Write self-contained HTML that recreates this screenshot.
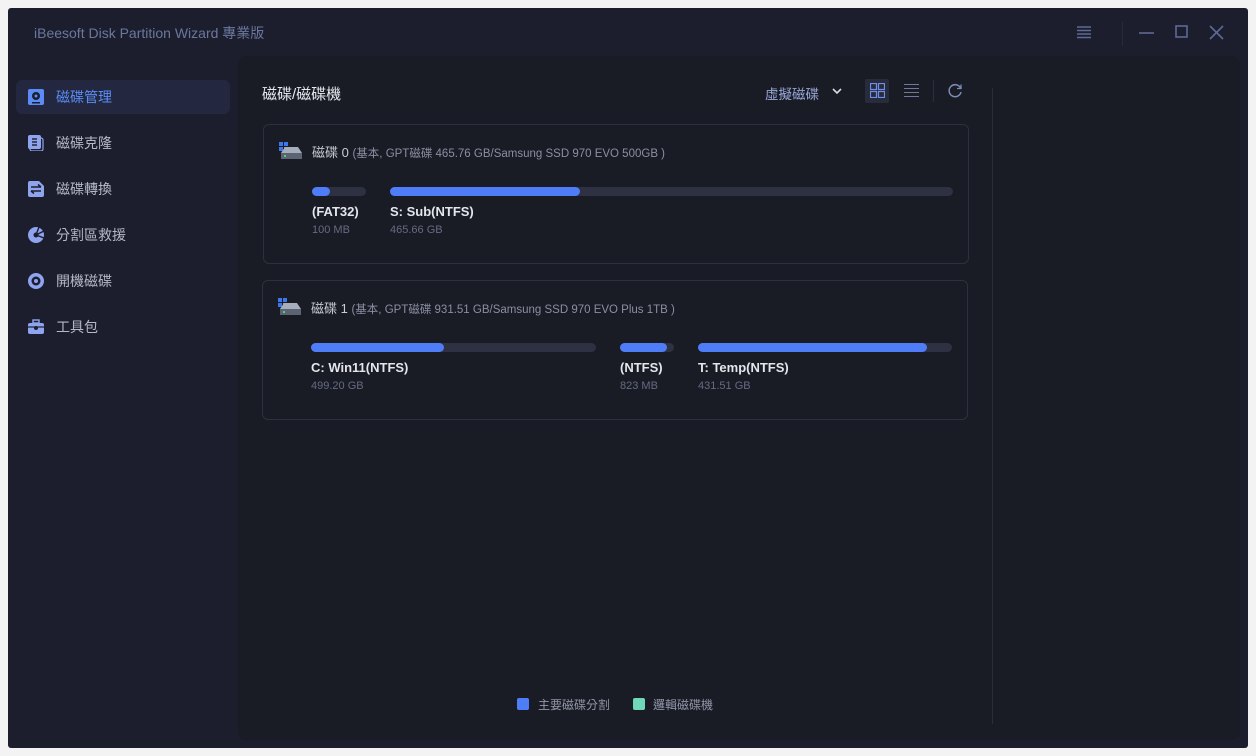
<!DOCTYPE html>
<html><head><meta charset="utf-8"><style>
*{margin:0;padding:0;box-sizing:border-box}
body{width:1256px;height:756px;background:#f3f3f4;font-family:"Liberation Sans","Noto Sans CJK TC",sans-serif;overflow:hidden;position:relative}
.app{position:absolute;left:8px;top:8px;width:1240px;height:740px;background:#1c1e2e;border-radius:3px}
.abs{position:absolute}
.title{left:26px;top:15px;font-size:14px;color:#6a789c}
.nav{left:8px;width:214px;height:34px;display:flex;align-items:center;font-size:14px;color:#b5b9c6}
.nav.act{background:#232840;border-radius:6px;color:#5b8cf5}
.nav svg{margin-left:12px;margin-right:12px}
.panel{left:230px;top:48px;width:1002px;height:684px;background:#191b25;border-radius:8px}
.card{position:absolute;left:25px;width:706px;height:140px;border:1px solid #2d3040;border-radius:6px}
.hdr{position:absolute;left:48px;top:17px;font-size:13px;color:#c8cbd4;white-space:nowrap}
.hdr small{font-size:11.5px;color:#8a8fa3}
.bar{position:absolute;top:62px;height:9px;background:#2d3142;border-radius:5px}
.bar i{display:block;height:9px;background:#4f7cf7;border-radius:5px}
.lbl{position:absolute;top:79px;font-size:13px;font-weight:bold;color:#e4e6ec;white-space:nowrap}
.sz{position:absolute;top:99px;font-size:11px;color:#656b83;white-space:nowrap}
</style></head><body>
<div class="app">
<div class="abs title">iBeesoft Disk Partition Wizard 專業版</div>
<svg class="abs" style="left:1068px;top:17px" width="16" height="14"><g stroke="#5d6a94" stroke-width="1.5"><line x1="1" y1="2" x2="15" y2="2"/><line x1="1" y1="5.5" x2="15" y2="5.5"/><line x1="1" y1="9" x2="15" y2="9"/><line x1="1" y1="12.5" x2="15" y2="12.5"/></g></svg>
<div class="abs" style="left:1114px;top:14px;width:1px;height:24px;background:#262a3c"></div>
<svg class="abs" style="left:1130px;top:16px" width="100" height="16"><g stroke="#5d6a94" stroke-width="1.6" fill="none"><line x1="1" y1="9" x2="16" y2="9"/><rect x="38" y="2" width="11" height="11"/><path d="M72 2 L85 15 M85 2 L72 15"/></g></svg>

<div class="abs nav act" style="top:72px"><svg width="16" height="16"><rect x="0" y="0" width="16" height="16" rx="2" fill="#5b8cf5"/><circle cx="8" cy="7" r="4" fill="#1c1e2e"/><circle cx="8" cy="7" r="1.5" fill="#5b8cf5"/><rect x="4" y="13" width="8" height="1.5" fill="#1c1e2e"/></svg>磁碟管理</div>
<div class="abs nav" style="top:118px"><svg width="16" height="16"><rect x="2" y="3" width="13" height="13" rx="2" fill="none" stroke="#8fa4ee" stroke-width="1.2"/><rect x="0" y="0" width="13" height="14" rx="2" fill="#8fa4ee"/><g stroke="#1c1e2e" stroke-width="1.4"><line x1="4" y1="4" x2="9" y2="4"/><line x1="4" y1="7" x2="9" y2="7"/><line x1="4" y1="10" x2="9" y2="10"/></g></svg>磁碟克隆</div>
<div class="abs nav" style="top:164px"><svg width="16" height="16"><path d="M0 2 Q0 0 2 0 L11 0 L16 5 L16 14 Q16 16 14 16 L2 16 Q0 16 0 14Z" fill="#8fa4ee"/><g stroke="#1c1e2e" stroke-width="1.5" fill="none"><path d="M3 6 H13 M10 3.5 L13 6 M13 10 H3 M6 12.5 L3 10"/></g></svg>磁碟轉換</div>
<div class="abs nav" style="top:210px"><svg width="16" height="16"><circle cx="8" cy="8" r="8" fill="#8fa4ee"/><path d="M8 8 L16 4 M8 8 L16 11 M8 8 L11 0" stroke="#1c1e2e" stroke-width="1.4"/><circle cx="8" cy="8" r="2.5" fill="#1c1e2e"/></svg>分割區救援</div>
<div class="abs nav" style="top:256px"><svg width="16" height="16"><circle cx="8" cy="8" r="8" fill="#8fa4ee"/><circle cx="8" cy="8" r="4.5" fill="#1c1e2e"/><circle cx="8" cy="8" r="2" fill="#8fa4ee"/></svg>開機磁碟</div>
<div class="abs nav" style="top:302px"><svg width="16" height="16"><rect x="5" y="1" width="6" height="3" fill="none" stroke="#8fa4ee" stroke-width="1.4"/><rect x="0" y="4" width="16" height="11" rx="2" fill="#8fa4ee"/><line x1="0" y1="8" x2="16" y2="8" stroke="#1c1e2e" stroke-width="1.2"/><circle cx="8" cy="9" r="2" fill="#1c1e2e"/></svg>工具包</div>

<div class="abs panel">
 <div class="abs" style="left:24px;top:27px;font-size:15px;color:#e8eaf0">磁碟/磁碟機</div>
 <div class="abs" style="left:527px;top:27px;font-size:13.5px;color:#9aa8d8">虛擬磁碟</div>
 <svg class="abs" style="left:594px;top:31px" width="10" height="8"><path d="M1 2 L5 6 L9 2" stroke="#d8dbe4" stroke-width="1.6" fill="none"/></svg>
 <div class="abs" style="left:627px;top:23px;width:24px;height:24px;background:#272b3c;border-radius:2px"></div>
 <svg class="abs" style="left:632px;top:27px" width="15" height="15"><g fill="none" stroke="#6f8ee8" stroke-width="1.2"><rect x="0.5" y="0.5" width="6" height="6"/><rect x="8.5" y="0.5" width="6" height="6"/><rect x="0.5" y="8.5" width="6" height="6"/><rect x="8.5" y="8.5" width="6" height="6"/></g></svg>
 <svg class="abs" style="left:666px;top:27px" width="15" height="15"><g stroke="#6f7a9a" stroke-width="1"><line x1="0" y1="1.5" x2="15" y2="1.5"/><line x1="0" y1="5.5" x2="15" y2="5.5"/><line x1="0" y1="9.5" x2="15" y2="9.5"/><line x1="0" y1="13.5" x2="15" y2="13.5"/></g></svg>
 <div class="abs" style="left:695px;top:24px;width:1px;height:22px;background:#2a2e3e"></div>
 <svg class="abs" style="left:709px;top:27px" width="16" height="16"><path d="M13.5 5 A6 6 0 1 0 14 9" fill="none" stroke="#7b8db8" stroke-width="1.5"/><path d="M14 1.5 V5.5 H10" fill="none" stroke="#7b8db8" stroke-width="1.3"/></svg>
 <div class="abs" style="left:754px;top:32px;width:1px;height:636px;background:#2a2d3c"></div>

 <div class="card" style="top:68px">
  <svg class="abs" style="left:15px;top:17px" width="24" height="18"><rect x="0" y="0" width="4" height="4" fill="#3e78e8"/><rect x="5" y="0" width="4" height="4" fill="#3e78e8"/><rect x="0" y="5" width="4" height="4" fill="#3e78e8"/><rect x="5" y="5" width="4" height="4" fill="#6c9cf5"/><path d="M2 11 L6 5 H19 L23 11 V16 H2Z" fill="#a6adbd"/><rect x="2" y="11" width="21" height="6" fill="#5c6474"/><rect x="5" y="13" width="2" height="2" fill="#4fd08a"/></svg>
  <div class="hdr">磁碟 0 <small>(基本, GPT磁碟 465.76 GB/Samsung SSD 970 EVO 500GB )</small></div>
  <div class="bar" style="left:48px;width:54px"><i style="width:18px"></i></div>
  <div class="lbl" style="left:48px">(FAT32)</div><div class="sz" style="left:48px">100 MB</div>
  <div class="bar" style="left:126px;width:563px"><i style="width:190px"></i></div>
  <div class="lbl" style="left:126px">S: Sub(NTFS)</div><div class="sz" style="left:126px">465.66 GB</div>
 </div>

 <div class="card" style="top:224px;left:24px">
  <svg class="abs" style="left:15px;top:17px" width="24" height="18"><rect x="0" y="0" width="4" height="4" fill="#3e78e8"/><rect x="5" y="0" width="4" height="4" fill="#3e78e8"/><rect x="0" y="5" width="4" height="4" fill="#3e78e8"/><rect x="5" y="5" width="4" height="4" fill="#6c9cf5"/><path d="M2 11 L6 5 H19 L23 11 V16 H2Z" fill="#a6adbd"/><rect x="2" y="11" width="21" height="6" fill="#5c6474"/><rect x="5" y="13" width="2" height="2" fill="#4fd08a"/></svg>
  <div class="hdr">磁碟 1 <small>(基本, GPT磁碟 931.51 GB/Samsung SSD 970 EVO Plus 1TB )</small></div>
  <div class="bar" style="left:48px;width:285px"><i style="width:133px"></i></div>
  <div class="lbl" style="left:48px">C: Win11(NTFS)</div><div class="sz" style="left:48px">499.20 GB</div>
  <div class="bar" style="left:357px;width:54px"><i style="width:47px"></i></div>
  <div class="lbl" style="left:357px">(NTFS)</div><div class="sz" style="left:357px">823 MB</div>
  <div class="bar" style="left:435px;width:254px"><i style="width:229px"></i></div>
  <div class="lbl" style="left:435px">T: Temp(NTFS)</div><div class="sz" style="left:435px">431.51 GB</div>
 </div>

 <div class="abs" style="left:279px;top:642px;width:12px;height:12px;background:#4f7cf7;border-radius:2px"></div>
 <div class="abs" style="left:300px;top:640px;font-size:12px;color:#9297a8">主要磁碟分割</div>
 <div class="abs" style="left:395px;top:642px;width:12px;height:12px;background:#6fd8b8;border-radius:2px"></div>
 <div class="abs" style="left:415px;top:640px;font-size:12px;color:#9297a8">邏輯磁碟機</div>
</div>
</div>
</body></html>
